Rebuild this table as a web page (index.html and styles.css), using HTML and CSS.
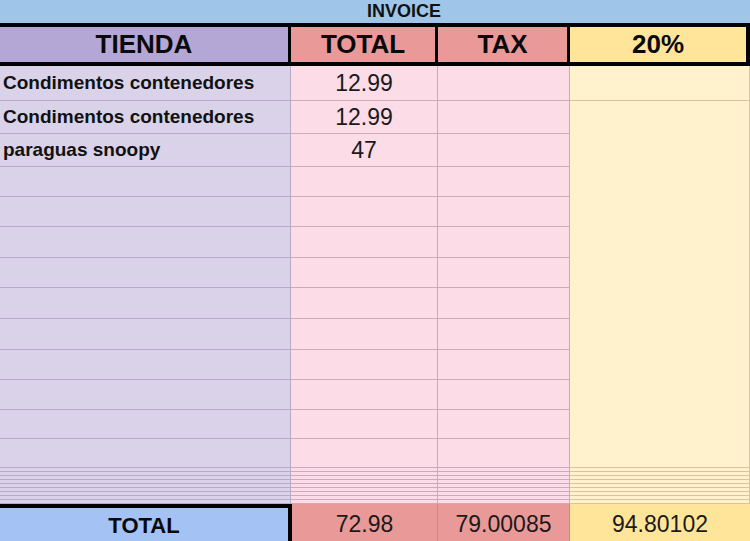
FILE: index.html
```html
<!DOCTYPE html>
<html lang="es">
<head>
<meta charset="utf-8">
<title>Invoice</title>
<link rel="stylesheet" href="styles.css">
</head>
<body>
<div class="sheet">
  <div class="title">INVOICE</div>
  <div class="head">
    <div class="hcell h-store">TIENDA</div>
    <div class="hcell h-red">TOTAL</div>
    <div class="hcell h-red">TAX</div>
    <div class="hcell h-yellow">20%</div>
  </div>
  <div class="body">
    <div class="c store txt">Condimentos contenedores</div>
    <div class="c pink num">12.99</div>
    <div class="c pink"></div>
    <div class="c yel"></div>

    <div class="c store txt">Condimentos contenedores</div>
    <div class="c pink num">12.99</div>
    <div class="c pink"></div>
    <div class="c yel merged"></div>

    <div class="c store txt">paraguas snoopy</div>
    <div class="c pink num">47</div>
    <div class="c pink"></div>

    <div class="c store"></div><div class="c pink"></div><div class="c pink"></div>
    <div class="c store"></div><div class="c pink"></div><div class="c pink"></div>
    <div class="c store"></div><div class="c pink"></div><div class="c pink"></div>
    <div class="c store"></div><div class="c pink"></div><div class="c pink"></div>
    <div class="c store"></div><div class="c pink"></div><div class="c pink"></div>
    <div class="c store"></div><div class="c pink"></div><div class="c pink"></div>
    <div class="c store"></div><div class="c pink"></div><div class="c pink"></div>
    <div class="c store"></div><div class="c pink"></div><div class="c pink"></div>
    <div class="c store"></div><div class="c pink"></div><div class="c pink"></div>
    <div class="c store"></div><div class="c pink"></div><div class="c pink"></div>

    <div class="c store"></div><div class="c pink"></div><div class="c pink"></div><div class="c yel"></div>
    <div class="c store"></div><div class="c pink"></div><div class="c pink"></div><div class="c yel"></div>
    <div class="c store"></div><div class="c pink"></div><div class="c pink"></div><div class="c yel"></div>
    <div class="c store"></div><div class="c pink"></div><div class="c pink"></div><div class="c yel"></div>
    <div class="c store"></div><div class="c pink"></div><div class="c pink"></div><div class="c yel"></div>
    <div class="c store"></div><div class="c pink"></div><div class="c pink"></div><div class="c yel"></div>
    <div class="c store"></div><div class="c pink"></div><div class="c pink"></div><div class="c yel"></div>
    <div class="c store"></div><div class="c pink"></div><div class="c pink"></div><div class="c yel"></div>
    <div class="c store"></div><div class="c pink"></div><div class="c pink"></div><div class="c yel"></div>
  </div>
  <div class="totals">
    <div class="t t-label">TOTAL</div>
    <div class="t t-red">72.98</div>
    <div class="t t-red">79.00085</div>
    <div class="t t-yellow">94.80102</div>
  </div>
</div>
</body>
</html>
```
FILE: styles.css
```css
html, body {
  margin: 0;
  padding: 0;
  background: #ffffff;
}
body {
  width: 750px;
  height: 541px;
  overflow: hidden;
  font-family: "Liberation Sans", Arial, sans-serif;
  color: #111;
}
.sheet {
  width: 750px;
  display: flex;
  flex-direction: column;
}
.title {
  height: 23px;
  background: #9fc5e8;
  box-sizing: border-box;
  padding-left: 58px;
  display: flex;
  align-items: center;
  justify-content: center;
  font-weight: bold;
  font-size: 18px;
  color: #111;
}
.head {
  display: grid;
  grid-template-columns: 288px 144px 129px 176px;
  column-gap: 3px;
  padding: 4px 4px 4px 0;
  background: #000;
}
.hcell {
  height: 35px;
  display: flex;
  align-items: center;
  justify-content: center;
  font-weight: bold;
  font-size: 26px;
  color: #0a0a0a;
}
.h-store { background: #b4a7d6; }
.h-red { background: #ea9999; }
.h-yellow { background: #ffe599; }

.body {
  display: grid;
  grid-template-columns: 291px 147px 132px 180px;
  grid-template-rows: 35px 33px 33px 30px 30px 31px 30px 31px 31px 30px 30px 29px 29px repeat(9, 4px);
}
.c {
  box-sizing: border-box;
  border-right: 1px solid;
  border-bottom: 1px solid;
  display: flex;
  align-items: center;
  min-height: 0;
}
.store { background: #d9d2e9; border-color: #b6aac4; }
.pink { background: #fbdce7; border-color: #cdaabb; }
.yel { background: #fff2cc; border-color: #d4c4a2; }
.merged { grid-row: span 12; }
.txt {
  padding-left: 3px;
  font-weight: bold;
  font-size: 19px;
  color: #111;
}
.num {
  justify-content: center;
  font-size: 23px;
  color: #1a1a1a;
}

.totals {
  display: grid;
  grid-template-columns: 292px 146px 132px 180px;
  height: 40px;
}
.t {
  box-sizing: border-box;
  display: flex;
  align-items: center;
  justify-content: center;
  font-size: 23px;
  color: #1a1a1a;
}
.t-label {
  background: #a4c2f4;
  border-top: 4px solid #000;
  border-right: 4px solid #000;
  font-weight: bold;
  font-size: 22px;
  color: #0a0a0a;
}
.t-red { background: #ea9999; border-right: 1px solid #c98a8a; }
.t-yellow { background: #ffe599; }
```
